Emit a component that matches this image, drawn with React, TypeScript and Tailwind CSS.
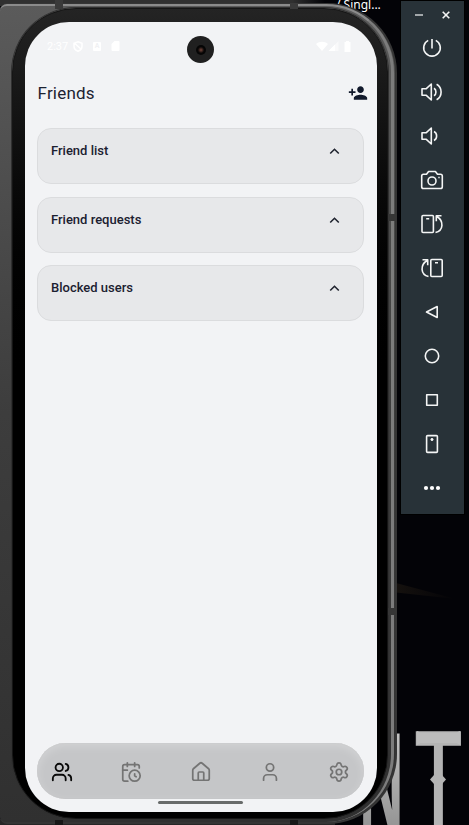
import React from "react";
import { Users, CalendarClock, House, User, Settings } from "lucide-react";

function Stroke({ children }: { children: React.ReactNode }) {
  return (
    <svg width="24" height="24" viewBox="0 0 24 24" fill="none" stroke="#f4f5f5" strokeWidth="1.6" strokeLinejoin="round">
      {children}
    </svg>
  );
}

const tools: React.ReactNode[] = [
  <Stroke><path d="M8.2 4.4a8.3 8.3 0 1 0 7.6 0M12 3v9.5" /></Stroke>,
  <Stroke><path d="M2 8.7h4.3L11.3 4v16l-5-4.7H2zM14 8.2c2.6 1.5 2.6 6.1 0 7.6M16.6 4.2c6 3.3 6 12.3 0 15.6" /></Stroke>,
  <Stroke><path d="M2 8.7h4.3L11.3 4v16l-5-4.7H2zM14 7.5c3.5 1.7 3.5 7.3 0 9" /></Stroke>,
  <Stroke>
    <path d="M3.5 6.3h3L8.6 3.5h6.8l2.1 2.8h3a1.8 1.8 0 0 1 1.8 1.8v10.6a1.8 1.8 0 0 1-1.8 1.8h-17a1.8 1.8 0 0 1-1.8-1.8V8.1a1.8 1.8 0 0 1 1.8-1.8z" />
    <circle cx="12" cy="13" r="4" /><path d="M18.3 9.5h1.4" />
  </Stroke>,
  <Stroke><rect x="2" y="3.5" width="11.4" height="17" rx="1" /><path d="M6.2 6.7h3M15.5 20.5c8-1.8 8.8-11.5 1-16.2M21.5 3.8h-5.2v5.4" /></Stroke>,
  <Stroke><rect x="10.8" y="3.5" width="11.4" height="17" rx="1" /><path d="M15 6.7h3M8.5 20.5c-8-1.8-8.8-11.5-1-16.2M2.5 3.8h5.2v5.4" /></Stroke>,
  <Stroke><path d="M17.2 6.5v11L6.5 12z" /></Stroke>,
  <Stroke><circle cx="12" cy="12" r="6.7" /></Stroke>,
  <Stroke><rect x="6.7" y="6.7" width="10.6" height="10.6" /></Stroke>,
  <Stroke><rect x="6.6" y="3.6" width="10.8" height="16.8" rx="1" /><circle cx="12" cy="7.5" r="1.1" fill="#fff" strokeWidth="1" /></Stroke>,
  <Stroke><g fill="#fff" stroke="none"><circle cx="6" cy="12" r="2.1" /><circle cx="12" cy="12" r="2.1" /><circle cx="18" cy="12" r="2.1" /></g></Stroke>,
];

function Toolbar() {
  return (
    <aside className="absolute left-[400px] top-0 flex h-[515px] w-[65px] flex-col border border-black bg-[#283238]">
      <div className="flex h-[25px] items-center pl-[14px] pt-[3px]">
        <span className="h-[1.5px] w-2 bg-[#a2a7aa]" />
        <svg className="ml-[19px]" width="8" height="8" viewBox="0 0 8 8" stroke="#f4f5f5" strokeWidth="1.6"><path d="M.7.7l6.6 6.6M7.3.7L.7 7.3" /></svg>
      </div>
      <div className="flex flex-col">
        {tools.map((t, i) => <button key={i} className="flex h-11 items-center justify-center pr-[1px]">{t}</button>)}
      </div>
    </aside>
  );
}

function StatusBar() {
  return (
    <div className="flex h-12 items-center justify-between pl-[22px] pr-[25px] text-white">
      <div className="flex items-center">
        <span className="w-[26px] text-[11px] leading-none">2:37</span>
        <svg width="10" height="11" viewBox="0 0 10 11" fill="none" stroke="white" strokeWidth="1.5"><path d="M5 .8l4 1.4v3C9 7.8 7.2 9.4 5 10.2 2.8 9.4 1 7.8 1 5.2v-3zM1.6 2.3l6.6 6" /></svg>
        <span className="ml-[10px] flex h-[9px] w-2 items-center justify-center rounded-[1px] bg-white text-[7px] font-bold text-[#f0f1f3]">A</span>
        <svg className="ml-[10px]" width="9" height="10" viewBox="0 0 8 10" fill="white"><path d="M3 0h4a1 1 0 0 1 1 1v8a1 1 0 0 1-1 1H1a1 1 0 0 1-1-1V3z" /></svg>
      </div>
      <svg width="36" height="11" viewBox="0 0 36 11" fill="white">
        <path d="M0 3c3.5-3 8.500-3 12 0L6 10z" />
        <path d="M22.500 0v10h-10z" fillOpacity=".5" /><path d="M19 3.500v6.500h-6.500z" />
        <path d="M30 1V0h3v1h1.500v10h-6V1z" />
      </svg>
    </div>
  );
}

function Card({ title }: { title: string }) {
  return (
    <section className="flex h-14 items-start justify-between rounded-[14px] border border-[#dbdcde] bg-[#e7e8ea] pl-[13px] pr-[23px] pt-[12px]">
      <h2 className="text-[13px] font-medium leading-5 text-[#1b2030]">{title}</h2>
      <svg className="mt-[5px]" width="11" height="11" viewBox="0 0 11 11" fill="none" stroke="#20242f" strokeWidth="1.6"><path d="M1.200 7.500l4.300-4.200 4.300 4.200" /></svg>
    </section>
  );
}

function Screen() {
  return (
    <main className="absolute left-[25px] top-[22px] flex h-[790px] w-[352px] flex-col overflow-hidden rounded-[44px] bg-[#f2f3f5]">
      <StatusBar />
      <header className="flex h-[46px] items-center justify-between pl-[12.500px] pr-[9.500px]">
        <h1 className="text-[17px] leading-6 tracking-[0.2px] text-[#1c2231]">Friends</h1>
        <svg width="20" height="20" viewBox="0 0 24 24" fill="#11192b"><path d="M15 12c2.210 0 4-1.790 4-4s-1.790-4-4-4-4 1.790-4 4 1.790 4 4 4zm-9-2V7H4v3H1v2h3v3h2v-3h3v-2H6zm9 4c-2.670 0-8 1.340-8 4v2h16v-2c0-2.660-5.330-4-8-4z" /></svg>
      </header>
      <div className="mt-[12.200px] flex flex-col gap-[12.400px] pl-[12px] pr-[13px]">
        <Card title="Friend list" />
        <Card title="Friend requests" />
        <Card title="Blocked users" />
      </div>
      <nav className="mb-[13px] ml-[12px] mr-[13px] mt-auto flex h-[56px] items-center justify-between rounded-full bg-[#c5c6c8] px-[14px] pt-[1px] text-[#747474] shadow-[inset_0_3px_10px_rgba(255,255,255,0.25),inset_0_0_1px_#b0b0b0]">
        <Users size={22} strokeWidth={2} color="#090909" />
        <CalendarClock size={22} strokeWidth={1.900} />
        <House size={22} strokeWidth={1.900} />
        <User size={22} strokeWidth={1.900} />
        <Settings size={22} strokeWidth={1.900} />
      </nav>
      <div className="absolute bottom-[8px] left-[133px] h-[3px] w-[85px] rounded-full bg-[#686b6a]" />
    </main>
  );
}

function Phone() {
  return (
    <div className="absolute inset-0">
      <div className="absolute left-0 top-0 h-[6px] w-[325px] bg-linear-to-r from-[#303030] from-90% to-transparent" />
      <div className="absolute bottom-0 left-0 h-[6px] w-[335px] bg-[#272727]" />
      <div className="absolute left-0 top-[3px] h-[821px] w-[397px] rounded-[7px_70px_70px_7px] border-y-2 border-r-2 border-[#353535] bg-linear-to-b from-[#5b5b5b] via-[#3d3d3d] to-[#303030]" />
      <div className="absolute left-0 top-[4px] h-[818px] w-[394px] rounded-[7px_68px_68px_7px] border-r-[3px] border-t-[2px] border-r-[#7c7c7c] border-t-[#8b8b8b]" />
      <div className="absolute left-[12px] top-[8px] h-[811px] w-[376px] rounded-[64px] border border-[#151515] bg-linear-to-b from-[#242424] to-black to-48% shadow-[0_0_0_1px_#303030]" />
      <div className="absolute left-[55px] top-0 h-[9px] w-2 bg-[#3a3a3a]" />
      <div className="absolute left-[290px] top-[3px] h-[6px] w-2 bg-[#3a3a3a]" />
      <div className="absolute left-[388px] top-[214px] h-[7px] w-[8px] bg-[#363636]" />
      <div className="absolute left-[388px] top-[608px] h-[7px] w-[8px] bg-[#363636]" />
      <div className="absolute left-[55px] top-[820px] h-[5px] w-2 bg-[#171717]" />
      <div className="absolute left-[290px] top-[820px] h-[5px] w-2 bg-[#171717]" />
      <Screen />
      <div className="absolute left-[187px] top-[36px] flex size-[27px] items-center justify-center rounded-full bg-[#202020]">
        <div className="size-[10px] rounded-full bg-[radial-gradient(circle,#77473c,#050505_45%)]" />
      </div>
    </div>
  );
}

export default function App() {
  return (
    <div className="relative h-[825px] w-[469px] overflow-hidden bg-[#030307] font-[Roboto,sans-serif]">
      <div className="absolute left-[336px] top-[-4px] whitespace-nowrap font-['Noto_Sans',sans-serif] text-[12px] leading-[18px] text-white">/ Singl...</div>
      <div className="absolute left-[396px] top-[583px] h-[16px] w-[60px] bg-linear-to-r from-[#15110e] to-transparent [clip-path:polygon(0_0,100%_100%,0_60%)]" />
      <div className="absolute left-[359px] top-[712px] origin-top scale-y-[2.3] bg-linear-to-b from-[#ccc] to-[#888] bg-clip-text font-['Liberation_Sans',sans-serif] text-[62px] font-bold leading-[62px] text-transparent">N</div>
      <div className="absolute left-[417px] top-[717px] origin-top scale-y-[1.85] font-['DejaVu_Sans',sans-serif] text-[70px] leading-[72px] text-[#b4b4b4] [-webkit-text-stroke:2px_#b4b4b4]">T</div>
      <div className="absolute left-[417px] top-[731px] h-[14px] w-[43px] bg-[#bcbcbc] [clip-path:polygon(0_0,8%_10%,92%_10%,100%_0,100%_100%,92%_85%,8%_85%,0_100%)]" />
      <div className="absolute left-[430px] top-[775px] h-[9px] w-[16px] bg-[#b4b4b4] [clip-path:polygon(0_50%,25%_0,75%_0,100%_50%,75%_100%,25%_100%)]" />
      <Phone />
      <Toolbar />
    </div>
  );
}
